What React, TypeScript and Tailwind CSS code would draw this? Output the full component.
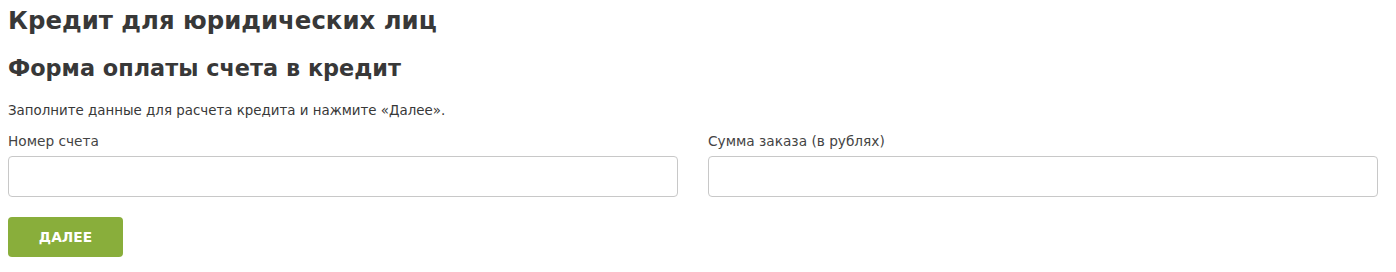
import React from 'react';

const font = { fontFamily: '"DejaVu Sans", "Noto Sans", sans-serif' };

export default function App() {
  return (
    <div className="bg-white w-[1396px] h-[272px] pl-[8px] pr-[18px] text-[#383838]" style={font}>
      <h1 className="text-[24.4px] leading-[30px] font-bold pt-[6px]">Кредит для юридических лиц</h1>
      <h2 className="text-[22.4px] leading-[28px] font-bold mt-[18px]">Форма оплаты счета в кредит</h2>
      <p className="text-[13.4px] leading-[18px] mt-[20px]">
        Заполните данные для расчета кредита и нажмите «Далее».
      </p>
      <form className="mt-[12px]" onSubmit={(e) => e.preventDefault()}>
        <div className="grid grid-cols-2 gap-[30px]">
          <label className="flex flex-col">
            <span className="text-[13.7px] leading-[18px] text-[#444]">Номер счета</span>
            <input className="mt-[6px] h-[41px] border border-[#c8c8c8] rounded-[4px] px-3 outline-none" />
          </label>
          <label className="flex flex-col">
            <span className="text-[13.7px] leading-[18px] text-[#444]">Сумма заказа (в рублях)</span>
            <input className="mt-[6px] h-[41px] border border-[#c8c8c8] rounded-[4px] px-3 outline-none" />
          </label>
        </div>
        <button
          type="submit"
          className="mt-[20px] w-[115px] h-[40px] rounded-[4px] bg-[#89ae3b] text-white text-[13.8px] font-bold uppercase"
        >
          Далее
        </button>
      </form>
    </div>
  );
}
